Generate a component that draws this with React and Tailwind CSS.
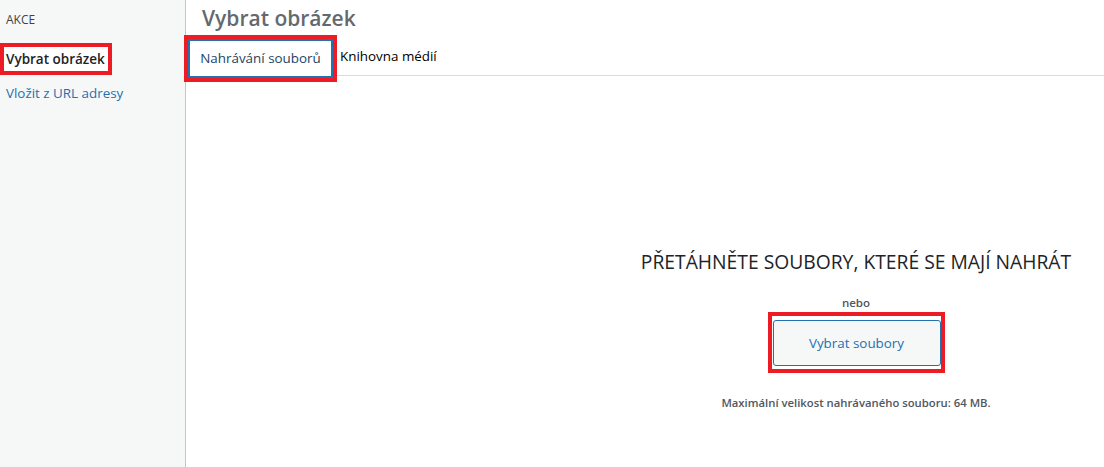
import React from 'react';

const font = { fontFamily: '"Open Sans", "Noto Sans", sans-serif' };

const Sidebar = () => (
    <div className="w-[186px] shrink-0 bg-[#f6f7f7] border-r border-[#c3c4c7] flex flex-col">
        <div className="pl-[6px] pt-[12px] text-[12px] leading-[16px] text-[#3c434a]">AKCE</div>
        <div className="mt-[15px] self-start border-4 border-[#ed1c24] bg-white h-[32px] w-[112px] pl-[2px] flex items-center">
            <span className="text-[13.5px] font-semibold text-[#1d2327]">Vybrat obrázek</span>
        </div>
        <a className="mt-[8px] pl-[6px] text-[13.4px] leading-[20px] text-[#2271b1]">Vložit z URL adresy</a>
    </div>
);

const Tabs = () => (
    <div className="flex items-end h-[42px] border-b border-[#dcdcde]">
        <div className="-ml-[2px] -mb-[7px] border-4 border-[#ed1c24] h-[47px] w-[153px]">
            <div className="h-full w-full bg-white border-2 border-[#2271b1] flex items-center justify-center">
                <span className="text-[13.4px] text-[#1d4463]">Nahrávání souborů</span>
            </div>
        </div>
        <span className="ml-[3px] mb-[9px] text-[13.4px] text-black">Knihovna médií</span>
    </div>
);

const Uploader = () => (
    <div className="ml-[425px] w-[490px] flex flex-col items-center">
        <h2 className="mt-[172px] text-[19.3px] leading-[28px] text-[#1d2327]">
            PŘETÁHNĚTE SOUBORY, KTERÉ SE MAJÍ NAHRÁT
        </h2>
        <p className="mt-[19px] text-[11.5px] leading-[16px] font-semibold text-[#50575e]">nebo</p>
        <div className="mt-[1px] border-4 border-[#ed1c24] pl-[1px] pr-[0px] pt-[4px] pb-[3px]">
            <button className="block w-[168px] h-[46px] rounded-[3px] border border-[#2271b1] bg-[#f6f7f7] text-[13.4px] text-[#2271b1]">
                Vybrat soubory
            </button>
        </div>
        <p className="mt-[22px] text-[11.3px] leading-[16px] font-semibold text-[#50575e]">
            Maximální velikost nahrávaného souboru: 64 MB.
        </p>
    </div>
);

const App = () => {
    return (
        <div className="flex w-[1104px] h-[467px] overflow-hidden bg-white" style={font}>
            <Sidebar />
            <div className="flex-1 flex flex-col">
                <h1 className="pl-[16px] pt-[2px] h-[34px] text-[21px] leading-[32px] font-semibold text-[#646970]">
                    Vybrat obrázek
                </h1>
                <Tabs />
                <Uploader />
            </div>
        </div>
    );
};

export default App;
